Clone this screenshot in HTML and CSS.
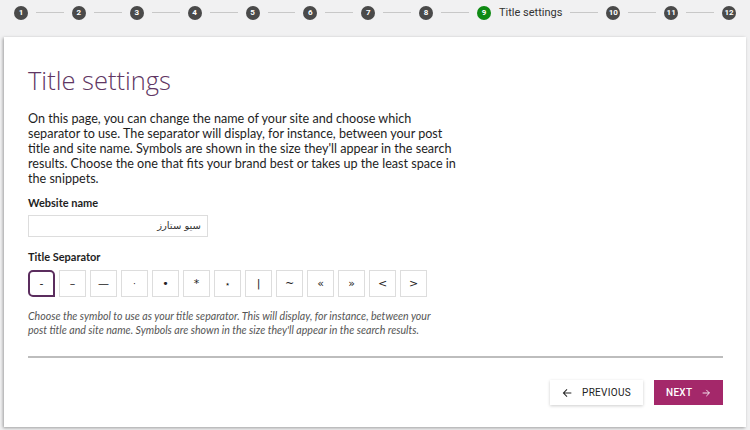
FILE: index.html
```html
<!DOCTYPE html>
<html>
<head>
<meta charset="utf-8">
<link rel="stylesheet" href="styles.css">
</head>
<body>
<div class="stepper">
  <span class="dot">1</span><span class="line"></span>
  <span class="dot">2</span><span class="line"></span>
  <span class="dot">3</span><span class="line"></span>
  <span class="dot">4</span><span class="line"></span>
  <span class="dot">5</span><span class="line"></span>
  <span class="dot">6</span><span class="line"></span>
  <span class="dot">7</span><span class="line"></span>
  <span class="dot">8</span><span class="line"></span>
  <span class="dot active">9</span><span class="step-label">Title settings</span><span class="line"></span>
  <span class="dot">10</span><span class="line"></span>
  <span class="dot">11</span><span class="line"></span>
  <span class="dot">12</span>
</div>
<div class="card">
  <h1 class="title">Title settings</h1>
  <p class="intro">On this page, you can change the name of your site and choose which separator to use. The separator will display, for instance, between your post title and site name. Symbols are shown in the size they'll appear in the search results. Choose the one that fits your brand best or takes up the least space in the snippets.</p>
  <div class="label">Website name</div>
  <div class="input" dir="rtl">سيو ستارز</div>
  <div class="label sep-label">Title Separator</div>
  <div class="seps">
    <span class="sep selected">-</span>
    <span class="sep">–</span>
    <span class="sep">—</span>
    <span class="sep small">·</span>
    <span class="sep">•</span>
    <span class="sep">*</span>
    <span class="sep small">⋆</span>
    <span class="sep">|</span>
    <span class="sep">~</span>
    <span class="sep">«</span>
    <span class="sep">»</span>
    <span class="sep">&lt;</span>
    <span class="sep">&gt;</span>
  </div>
  <p class="help">Choose the symbol to use as your title separator. This will display, for instance, between your post title and site name. Symbols are shown in the size they'll appear in the search results.</p>
  <div class="divider"></div>
  <div class="actions">
    <button class="btn prev"><svg width="14" height="14" viewBox="0 0 14 14"><path d="M13 7H2M7 2L2 7l5 5" fill="none" stroke="#222" stroke-width="1.4"/></svg>PREVIOUS</button>
    <button class="btn next">NEXT<svg width="14" height="14" viewBox="0 0 14 14"><path d="M1 7h11M7 2l5 5-5 5" fill="none" stroke="#fff" stroke-width="1.4"/></svg></button>
  </div>
</div>
</body>
</html>
```
FILE: styles.css
```css
html, body {
  margin: 0;
  padding: 0;
  background: #f1f1f2;
  font-family: "Open Sans", sans-serif;
  width: 750px;
  height: 430px;
  overflow: hidden;
}
.stepper {
  display: flex;
  align-items: center;
  height: 25px;
  padding: 0 14px 0 14px;
}
.dot {
  width: 14px;
  height: 14px;
  border-radius: 50%;
  background: #4a4a4a;
  color: #fff;
  font-family: Roboto, sans-serif;
  font-size: 8px;
  font-weight: 700;
  display: flex;
  align-items: center;
  justify-content: center;
  flex: none;
}
.dot.active {
  background: #0f8a13;
}
.step-label {
  font-family: Roboto, sans-serif;
  font-size: 11px;
  color: #333;
  margin-left: 8px;
}
.line {
  flex: 1;
  height: 1px;
  background: #c8c8c8;
  margin: 0 8px;
}
.card {
  margin: 12px 4px 0 4px;
  height: 390px;
  box-sizing: border-box;
  background: #fff;
  box-shadow: -1px 1px 3px rgba(0,0,0,0.35);
  padding: 26px 23px 0 24px;
}
.title {
  margin: 0;
  font-weight: 300;
  font-size: 25.5px;
  line-height: 34px;
  color: #603663;
}
.intro {
  margin: 14px 0 0 0;
  width: 432px;
  font-family: Lato, sans-serif;
  font-size: 12.6px;
  line-height: 15px;
  color: #1e1e1e;
}
.label {
  margin-top: 10px;
  font-family: Lato, sans-serif;
  font-weight: 700;
  font-size: 11px;
  line-height: 14px;
  color: #1e1e1e;
}
.input {
  margin-top: 5px;
  width: 180px;
  height: 22px;
  box-sizing: border-box;
  border: 1px solid #ddd;
  font-family: "DejaVu Sans", sans-serif;
  font-size: 10px;
  line-height: 20px;
  padding: 0 6px;
  color: #333;
}
.sep-label {
  margin-top: 13px;
}
.seps {
  display: flex;
  gap: 4px;
  margin-top: 6px;
}
.sep {
  width: 27px;
  height: 27px;
  box-sizing: border-box;
  border: 1px solid #ddd;
  display: flex;
  align-items: center;
  justify-content: center;
  font-family: "DejaVu Sans", sans-serif;
  font-size: 11px;
  color: #222;
}
.sep.small {
  font-size: 9px;
}
.sep.selected {
  border: 2px solid #5b2d5e;
  border-radius: 5px 5px 0 5px;
}
.help {
  margin: 12px 0 0 0;
  font-family: Lato, sans-serif;
  font-style: italic;
  font-size: 10.6px;
  line-height: 14px;
  color: #555;
  width: 412px;
}
.divider {
  margin-top: 19px;
  height: 2px;
  background: #bdbdbd;
}
.actions {
  display: flex;
  justify-content: flex-end;
  gap: 11px;
  margin-top: 22px;
}
.btn {
  height: 25px;
  border: none;
  font-family: Roboto, sans-serif;
  font-size: 10px;
  font-weight: 500;
  letter-spacing: 0.3px;
  display: flex;
  align-items: center;
  gap: 10px;
  padding: 0 12px;
}
.prev {
  background: #fff;
  color: #222;
  font-weight: 400;
  box-shadow: 0 1px 3px rgba(0,0,0,0.2);
  width: 93px;
}
.next {
  background: #a4286a;
  color: #fff;
  width: 69px;
  justify-content: center;
}
```
